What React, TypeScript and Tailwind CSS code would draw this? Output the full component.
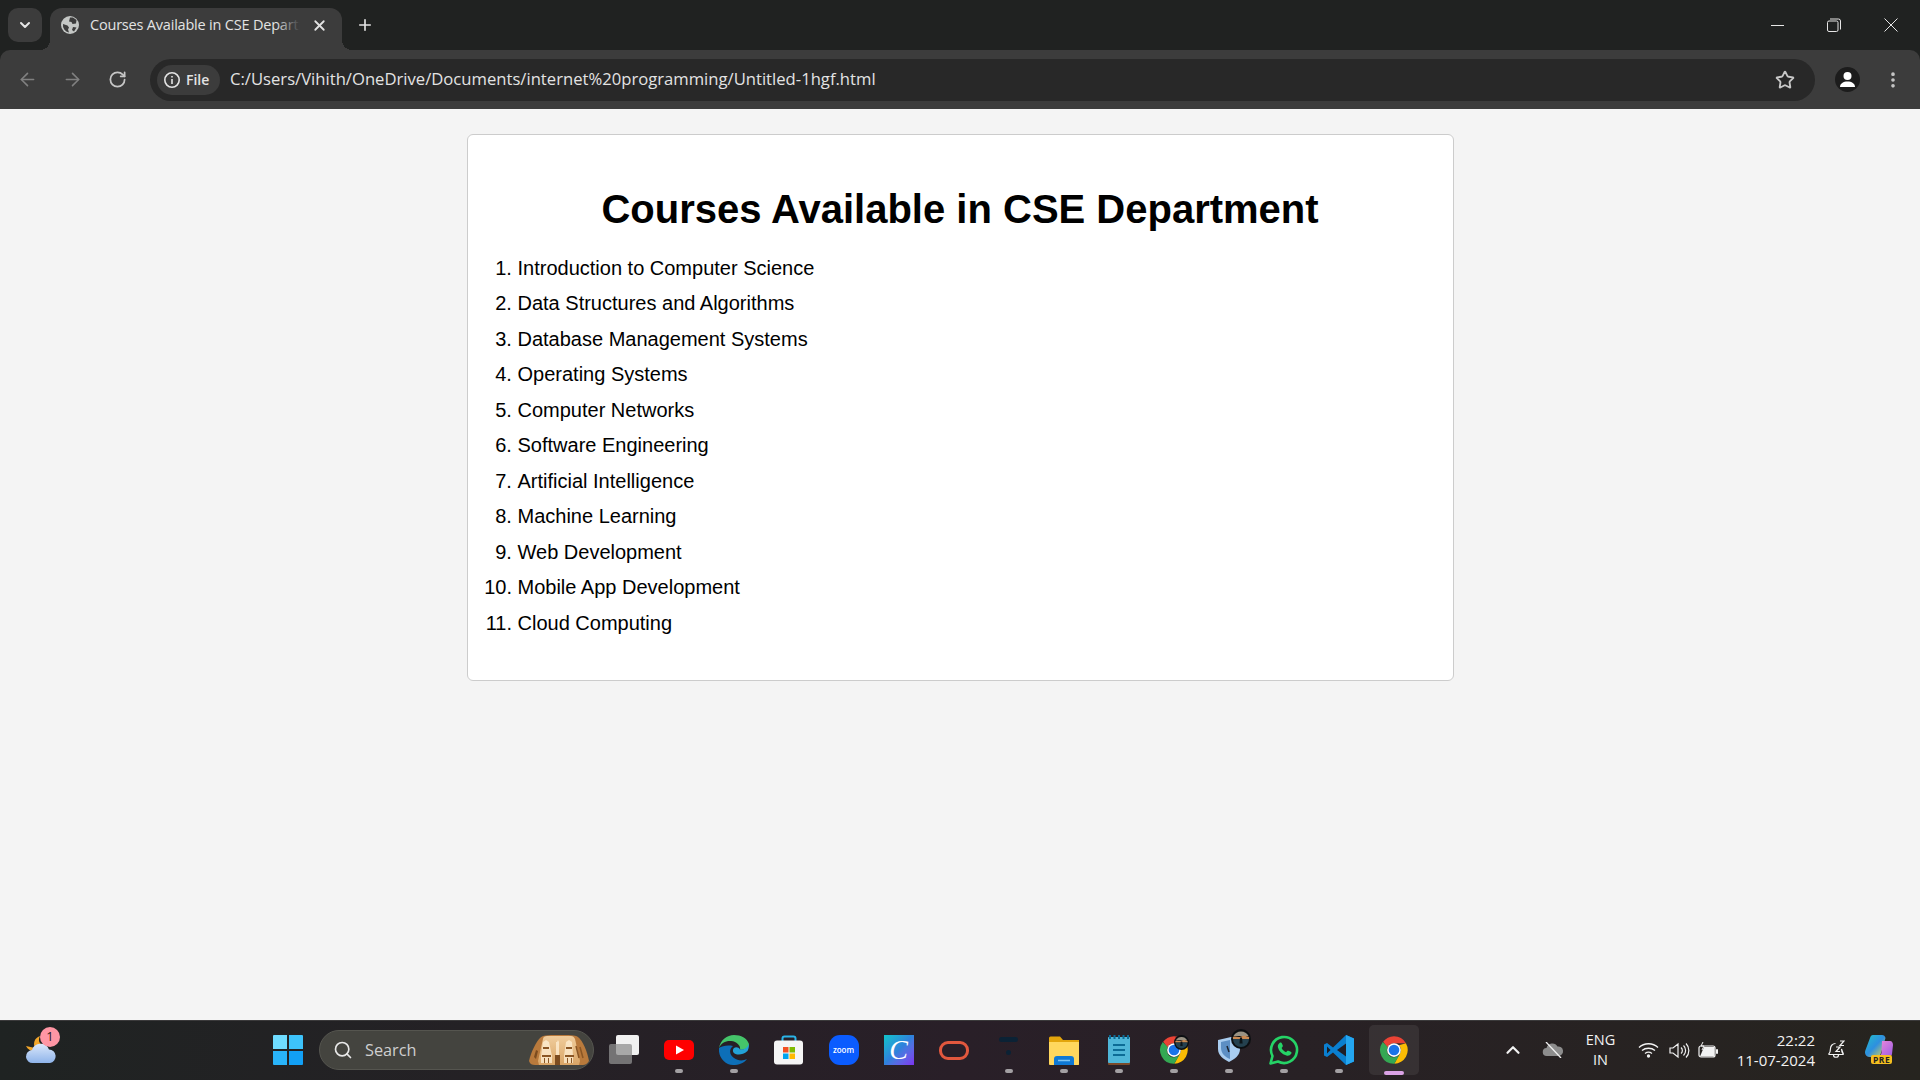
import { ArrowLeft, ArrowRight, ChevronDown, ChevronUp, EllipsisVertical, Plus, RotateCw, Search, Star, X } from 'lucide-react';

const courses = [
  'Introduction to Computer Science',
  'Data Structures and Algorithms',
  'Database Management Systems',
  'Operating Systems',
  'Computer Networks',
  'Software Engineering',
  'Artificial Intelligence',
  'Machine Learning',
  'Web Development',
  'Mobile App Development',
  'Cloud Computing',
];

function ChromeIcon() {
  return (
    <svg width="30" height="30" viewBox="0 0 48 48">
      <path d="M24 2a22 22 0 0 1 19.05 11H24a11 11 0 0 0-10.2 6.9L6.6 10.9A22 22 0 0 1 24 2z" fill="#ea4335" />
      <path d="M43.05 13A22 22 0 0 1 24.5 46l9.1-16.5A11 11 0 0 0 32 16.5z" fill="#fbbc04" />
      <path d="M6 11a22 22 0 0 0 18.5 35l9.1-16A11 11 0 0 1 14 19z" fill="#34a853" />
      <circle cx="24" cy="24" r="11" fill="#fff" />
      <circle cx="24" cy="24" r="8.5" fill="#1a73e8" />
    </svg>
  );
}

function ProfileBadge({ size, className }: { size: number; className: string }) {
  return (
    <svg width={size} height={size} viewBox="0 0 20 20" className={className}>
      <circle cx="10" cy="10" r="10" fill="#0c0f12" />
      <path d="M2.500 7A8.500 8.500 0 0 1 17.500 7z" fill="#9a9384" />
      <path d="M1.800 8C5 6.500 7 9 10 7.500S15 7 18.200 8L18 10H2z" fill="#c98a52" />
      <path d="M2 10h16A8 8 0 0 1 2 10z" fill="#24414f" />
      <path d="M9 8.500h2l.6 6H8.400z" fill="#0c1418" />
    </svg>
  );
}

function TaskIcon({ children, dot }: { children: React.ReactNode; dot?: boolean }) {
  return (
    <div className="relative flex h-[60px] w-[55px] items-center justify-center">
      <div className="relative flex h-[30px] w-[30px] items-center justify-center">{children}</div>
      {dot && <span className="absolute bottom-[7px] h-[4px] w-[8px] rounded-full bg-[#a3a0a3]" />}
    </div>
  );
}

function TabBar() {
  return (
    <div className="flex h-[50px] shrink-0 bg-[#202221] pt-2">
      <div className="ml-2 flex h-[34px] w-[34px] items-center justify-center rounded-[10px] bg-[#3c3c3c]">
        <ChevronDown size={16} strokeWidth={3} color="#e6e6e6" />
      </div>
      <div className="relative ml-2 flex h-[42px] w-[292px] items-center rounded-t-[12px] bg-[#3c3c3c] pb-[8px] pl-[11px]">
        <span className="absolute -left-[10px] bottom-0 h-[10px] w-[10px] bg-[radial-gradient(circle_at_0_0,transparent_10px,#3c3c3c_10px)]" />
        <span className="absolute -right-[10px] bottom-0 h-[10px] w-[10px] bg-[radial-gradient(circle_at_100%_0,transparent_10px,#3c3c3c_10px)]" />
        <svg width="18" height="18" viewBox="0 0 18 18" className="shrink-0">
          <circle cx="9" cy="9" r="9" fill="#c4c7c5" />
          <path d="M9 1.500 12 1.500 15.500 4 15 7.500 11.500 8 10.500 6 8 5.500zM2 8l4.500 1.500 1.500 2-1 2L8 16.500A7.500 7.500 0 0 1 2 8zM12 11l3.500.5L13 15.500 11 14z" fill="#3c3c3c" />
        </svg>
        <div className="relative ml-[11px] w-[210px] overflow-hidden whitespace-nowrap font-['Open_Sans',sans-serif] text-[14.5px] tracking-[-0.2px] text-[#e3e3e3]">
          Courses Available in CSE Department
          <span className="absolute inset-y-0 right-0 w-[24px] bg-gradient-to-r from-transparent to-[#3c3c3c]" />
        </div>
        <X size={17} strokeWidth={2.5} color="#e3e3e3" className="ml-[11px] shrink-0" />
      </div>
      <div className="ml-[14px] flex h-[34px] w-[18px] items-center justify-center">
        <Plus size={18} strokeWidth={2.2} color="#e3e3e3" />
      </div>
      <div className="ml-auto flex h-[34px] pr-px text-white">
        <div className="flex w-[56px] items-center justify-center">
          <span className="h-px w-[13px] bg-[#e6e6e6]" />
        </div>
        <div className="flex w-[57px] items-center justify-center">
          <svg width="14" height="14" viewBox="0 0 14 14" fill="none" stroke="#e6e6e6">
            <rect x="0.5" y="3" width="10.5" height="10.5" rx="1.5" />
            <path d="M3 1h8.500A2 2 0 0 1 13.500 3v8.500" />
          </svg>
        </div>
        <div className="flex w-[57px] items-center justify-center">
          <svg width="14" height="14" viewBox="0 0 14 14" stroke="#e6e6e6">
            <path d="M.5.5l13 13M13.500.5l-13 13" />
          </svg>
        </div>
      </div>
    </div>
  );
}

function Toolbar() {
  return (
    <div className="flex h-[59px] shrink-0 items-center rounded-t-[10px] bg-[#3c3c3c] pl-[5px] pr-[5px]">
      <div className="flex w-[45px] justify-center">
        <ArrowLeft size={21} strokeWidth={1.8} color="#808080" />
      </div>
      <div className="flex w-[45px] justify-center">
        <ArrowRight size={21} strokeWidth={1.8} color="#808080" />
      </div>
      <div className="flex w-[45px] justify-center">
        <RotateCw size={19} strokeWidth={2.2} color="#c7c7c7" />
      </div>
      <div className="ml-[10px] flex h-[42px] w-[1665px] items-center rounded-full bg-[#282828] pl-[7px] pr-[20px]">
        <div className="flex h-[30px] w-[63px] items-center gap-[5px] rounded-full bg-[#3c3c3c] pl-[6px]">
          <svg width="18" height="18" viewBox="0 0 18 18" fill="none" stroke="#e3e3e3" strokeWidth="1.6">
            <circle cx="9" cy="9" r="7.2" />
            <path d="M9 8v5M9 5v1.600" />
          </svg>
          <span className="font-['Open_Sans',sans-serif] text-[14px] font-semibold text-[#e3e3e3]">File</span>
        </div>
        <span className="ml-[10px] font-['Open_Sans',sans-serif] text-[16.65px] text-[#e3e3e3]">
          C:/Users/Vihith/OneDrive/Documents/internet%20programming/Untitled-1hgf.html
        </span>
        <Star size={20} strokeWidth={2.2} color="#c7c7c7" className="ml-auto" />
      </div>
      <div className="ml-[20px] flex h-[25px] w-[25px] items-center justify-center rounded-full bg-[#1c1c1c]">
        <svg width="17" height="17" viewBox="0 0 17 17" fill="#fff">
          <circle cx="8.5" cy="5" r="4" />
          <path d="M1 16c0-3.600 3.400-5.500 7.500-5.500S16 12.400 16 16z" />
        </svg>
      </div>
      <div className="ml-[20px] flex w-[25px] justify-center">
        <EllipsisVertical size={20} strokeWidth={2.4} color="#c7c7c7" />
      </div>
    </div>
  );
}

function Taskbar() {
  return (
    <div className="flex h-[60px] shrink-0 items-center border-t border-[#3b3a3b] bg-gradient-to-r from-[#1f2322] via-[#291f28] to-[#26241f] pb-px">
      <div className="relative flex h-[60px] w-[260px] shrink-0 pl-[25px]">
        <svg width="32" height="34" viewBox="0 0 32 34" className="mt-[15px]">
          <defs>
            <linearGradient id="weatherCloud" x1="0" y1="0" x2="0" y2="1">
              <stop offset="0" stopColor="#dbe8fb" />
              <stop offset="1" stopColor="#8fb4ea" />
            </linearGradient>
          </defs>
          <path d="M15 1C9 3 8 9 10 13L1 11c2 4 6 6 10 5l6-6C14 8 13 5 15 1z" fill="#f2a62a" />
          <path d="M8 28a6.500 6.500 0 0 1-1-13 9 9 0 0 1 17-.5A6.800 6.800 0 0 1 25 28z" fill="url(#weatherCloud)" />
        </svg>
        <span className="absolute left-[40px] top-[7px] flex h-[20px] w-[20px] items-center justify-center rounded-full bg-[#ff96a4] font-['Open_Sans',sans-serif] text-[13px] text-[#2a1a1c]">
          1
        </span>
      </div>

      <div className="flex w-[56px] shrink-0 justify-center">
        <svg width="30" height="30" viewBox="0 0 30 30">
          <path d="M0 1a1 1 0 0 1 1-1h13v14H0z" fill="#6fdcff" />
          <path d="M16 0h13a1 1 0 0 1 1 1v13H16z" fill="#3dc3fb" />
          <path d="M0 16h14v14H1a1 1 0 0 1-1-1z" fill="#29b4fa" />
          <path d="M16 16h14v13a1 1 0 0 1-1 1H16z" fill="#12a0f5" />
        </svg>
      </div>

      <div className="ml-[3px] flex h-[40px] w-[275px] shrink-0 items-center rounded-full border border-[#55554f] bg-[#44443f] pl-[13px]">
        <Search size={20} strokeWidth={2} color="#e8e8e8" />
        <span className="ml-[12px] font-['Open_Sans',sans-serif] text-[16.3px] text-[#cfcfcf]">Search</span>
        <svg width="62" height="32" viewBox="0 0 62 32" className="ml-auto mr-[3px]">
          <defs>
            <linearGradient id="templeFront" x1="0" y1="0" x2="0" y2="1">
              <stop offset="0" stopColor="#f0cd9c" />
              <stop offset="1" stopColor="#d9a566" />
            </linearGradient>
          </defs>
          <path d="M1 27C3 18 8 8 12 4 15 1 19 1 30 1s17 0 20 2c5 4 9 14 11 24-2 3-4 4-6 4H7c-3 0-5-1-6-4z" fill="#b97a3c" />
          <path d="M10 27 15 5c0-2 2-3 4-3h24c2 0 3 1 4 3l5 22-1 4H11z" fill="url(#templeFront)" />
          <path d="M15 8l3-2 3 2 3 14v7h-11v-7zM28 8h1l1-2 1 2v21h-3zM38 8l3-2 3 2 1 14v7H36v-7z" fill="#fff0d6" opacity=".75" />
          <path d="M15 13h6v2h-6zM38 13h6v2h-6zM14 21h9v2h-9zM37 21h9v2h-9zM16 24h1v5h-1zM20 24h1v5h-1zM39 24h1v5h-1zM43 24h1v5h-1z" fill="#8a5624" />
          <path d="M27 21h5v10h-5zM6 23l2-7 2 1-2 8z" fill="#7c4c1f" />
          <path d="M48 12l3 12M52 13l3 11" stroke="#8a5624" strokeWidth="1.500" />
        </svg>
      </div>

      <div className="ml-[2px] flex shrink-0">
        <TaskIcon>
          <div className="absolute left-[7px] top-0 h-[20px] w-[23px] rounded-[2px] bg-[#f1f1f1]" />
          <div className="absolute bottom-[1px] left-0 h-[20px] w-[23px] rounded-[2px] bg-[#8f8f8f]/75" />
        </TaskIcon>
        <TaskIcon dot>
          <svg width="30" height="30" viewBox="0 0 30 30">
            <rect y="5" width="30" height="20" rx="5" fill="#f00" />
            <path d="M12 10.500l8 4.500-8 4.500z" fill="#fff" />
          </svg>
        </TaskIcon>
        <TaskIcon dot>
          <svg width="30" height="30" viewBox="0 0 30 30">
            <path d="M15 0C8 0 1.500 5 0 13c2-5 7-7.500 12-7 6 .5 10 5 9 8.500 5 1 9-2 9-5.500C28 3 22 0 15 0z" fill="#45c46a" />
            <path d="M0 13C-1 22 6 30 14 30c6 0 11-2 14-6-4 2-9 2-13-1-5-3-5-9-1-12-6-1-11 0-14 2z" fill="#0d6fb8" />
            <path d="M21 14.500c-1-2-4-3-6-1.500-2 2-1 5 1.500 6 3 1 7.500 1 12-3 1-2 1.500-4 1.500-7-2 4-5 6-9 5.500z" fill="#23a3d9" />
          </svg>
        </TaskIcon>
        <TaskIcon>
          <svg width="30" height="30" viewBox="0 0 30 30">
            <path d="M8.500 7V3.500a2 2 0 0 1 2-2h9a2 2 0 0 1 2 2V7" fill="none" stroke="#2ab4e8" strokeWidth="2" />
            <rect y="5.500" width="29" height="24" rx="3" fill="#f5f5f5" />
            <rect x="9" y="12" width="5.500" height="5.500" fill="#f25022" />
            <rect x="15.500" y="12" width="5.500" height="5.500" fill="#7fba00" />
            <rect x="9" y="18.500" width="5.500" height="5.500" fill="#00a4ef" />
            <rect x="15.500" y="18.500" width="5.500" height="5.500" fill="#ffb900" />
          </svg>
        </TaskIcon>
        <TaskIcon>
          <div className="flex h-[30px] w-[30px] items-center justify-center rounded-[11px] bg-[#0b5cff] font-['Open_Sans',sans-serif] text-[8px] font-semibold text-white">
            zoom
          </div>
        </TaskIcon>
        <TaskIcon>
          <div className="flex h-[30px] w-[30px] items-center justify-center bg-gradient-to-br from-[#0fc4c9] via-[#2f80dc] to-[#7b2ff0] font-['Liberation_Serif',serif] text-[28px] italic text-white">
            C
          </div>
        </TaskIcon>
        <TaskIcon>
          <div className="h-[19px] w-[30px] rounded-[9px] border-[3px] border-[#e2583e]" />
        </TaskIcon>
        <TaskIcon dot>
          <div className="mb-[8px] flex flex-col items-center gap-[8px]">
            <span className="h-[5px] w-[19px] rounded-full bg-[#0b2235]" />
            <span className="h-[5px] w-[5px] rounded-full bg-[#0b2235]" />
          </div>
        </TaskIcon>
        <TaskIcon dot>
          <svg width="30" height="30" viewBox="0 0 30 30">
            <path d="M0 3a1.500 1.500 0 0 1 1.500-1.500H11L14 5h16v25H1.500A1.500 1.500 0 0 1 0 28.500z" fill="#e3a50c" />
            <path d="M0 7h30v21.500a1.500 1.500 0 0 1-1.500 1.500h-27A1.500 1.500 0 0 1 0 28.500z" fill="#ffd75e" />
            <path d="M5 30v-6a3 3 0 0 1 3-3h14a3 3 0 0 1 3 3v6z" fill="#0f78d4" />
            <path d="M9 25.500h12" stroke="#7cc4f4" strokeWidth="1.500" />
          </svg>
        </TaskIcon>
        <TaskIcon dot>
          <svg width="24" height="30" viewBox="0 0 24 30">
            <rect x="1" y="2" width="22" height="28" rx="1" fill="#7b4a2a" />
            <rect x="1" y="2" width="22" height="26" rx="1" fill="#4fb6d8" />
            <path d="M3 0v4M7.500 0v4M12 0v4M16.500 0v4M21 0v4" stroke="#0c6c96" strokeWidth="2" />
            <path d="M6 10h12M6 15h12M6 20h12" stroke="#0c6c96" strokeWidth="2" />
          </svg>
        </TaskIcon>
        <TaskIcon dot>
          <ChromeIcon />
          <ProfileBadge size={15} className="absolute left-[15px] top-0" />
        </TaskIcon>
        <TaskIcon dot>
          <svg width="30" height="30" viewBox="0 0 30 30">
            <path d="M4 5 17 2 26 4V14C26 20 21 24 15 27 9 24 4 20 4 14z" fill="#a9cdf0" />
            <path d="M7 7 16 5V24C11 22 7 18 7 13z" fill="#5d8fc4" />
            <path d="M13 11l2 6" stroke="#1c2430" strokeWidth="1.500" />
          </svg>
          <ProfileBadge size={20} className="absolute left-[17px] -top-[6px]" />
        </TaskIcon>
        <TaskIcon dot>
          <svg width="30" height="30" viewBox="0 0 30 30">
            <path d="M1.500 28.500 3.500 21A13 13 0 1 1 9 26.500z" fill="none" stroke="#25d366" strokeWidth="2.600" strokeLinejoin="round" />
            <path d="M10.500 8c1-.8 2-.6 2.400.4l.9 2.200c.2.500 0 1-.4 1.400l-.8.900c1 2 2.500 3.400 4.500 4.300l1-1.100c.4-.4.900-.5 1.400-.3l2.200 1c.8.400 1 1.200.5 2-1 1.500-2.800 2.300-4.800 1.700-4.600-1.400-7.600-4.400-8.500-8.300-.3-1.600.2-3.100 1.600-4.200z" fill="#25d366" />
          </svg>
        </TaskIcon>
        <TaskIcon dot>
          <svg width="30" height="30" viewBox="0 0 30 30">
            <path d="M22 0 30 3.500V26.500L22 30 9 17.500 3 22 0 20.500V9.500L3 8 9 12.500z" fill="#0a7fd0" />
            <path d="M22 0 30 3.500V26.500L22 30z" fill="#24a6f0" />
            <path d="M3 11.500 6.500 15 3 18.500z" fill="#1a1d24" />
            <path d="M22 8.500 13 15 22 21.500z" fill="#1f1e28" />
          </svg>
        </TaskIcon>
        <div className="relative flex h-[60px] w-[55px] items-center justify-center">
          <div className="absolute left-[2.500px] top-[5px] h-[50px] w-[50px] rounded-[5px] bg-white/[0.07]" />
          <div className="relative flex">
            <ChromeIcon />
          </div>
          <span className="absolute bottom-[5px] h-[4px] w-[20px] rounded-full bg-[#dba3e6]" />
        </div>
      </div>

      <div className="ml-auto flex items-center pr-[25px] font-['Open_Sans',sans-serif] text-[#f2f2f2]">
        <ChevronUp size={22} strokeWidth={2.400} color="#f2f2f2" />
        <svg width="22" height="16" viewBox="0 0 22 16" className="ml-[18px]">
          <path d="M5 14a4 4 0 0 1-.5-8 6 6 0 0 1 11-1.500 4.700 4.700 0 0 1 1.500 9.500z" fill="#8d8d8d" />
          <path d="M4 0 19 16" stroke="#f0f0f0" strokeWidth="1.300" />
        </svg>
        <div className="ml-[17px] flex w-[40px] flex-col items-center text-[14.5px] leading-[20px]">
          <span>ENG</span>
          <span>IN</span>
        </div>
        <svg width="21" height="16" viewBox="0 0 21 16" fill="none" stroke="#f2f2f2" strokeWidth="1.300" className="ml-[17px]">
          <path d="M1 5.500c5-5 14-5 19 0M4 8.500c3.500-3 9.500-3 13 0M7 11.500c2-1.500 5-1.500 7 0" />
          <circle cx="10.500" cy="14" r="1" fill="#f2f2f2" />
        </svg>
        <svg width="21" height="17" viewBox="0 0 21 17" fill="none" stroke="#f2f2f2" strokeWidth="1.200" className="ml-[10px]">
          <path d="M1 6h3l5-4v13l-5-4H1zM12 5.500a4 4 0 0 1 0 6M14.500 3.500a7 7 0 0 1 0 10M17 1.500a10 10 0 0 1 0 14" />
        </svg>
        <svg width="20" height="17" viewBox="0 0 20 17" className="ml-[8px]">
          <rect x="1" y="4" width="16" height="11" rx="2" fill="none" stroke="#f2f2f2" strokeWidth="1.200" />
          <path d="M2 14.500 6 5h10.500v9.500z" fill="#f2f2f2" />
          <path d="M5 0 3 4h3L4 8" stroke="#f2f2f2" fill="none" />
          <rect x="18" y="7" width="2" height="5" rx="1" fill="#f2f2f2" />
        </svg>
        <div className="ml-[17.500px] flex w-[80px] flex-col items-end text-[15px] leading-[20px]">
          <span>22:22</span>
          <span>11-07-2024</span>
        </div>
        <svg width="18" height="20" viewBox="0 0 18 20" fill="none" stroke="#f2f2f2" strokeWidth="1.200" className="ml-[11.500px]">
          <path d="M1.500 14.500c1.500-1.500 2-2.500 2-6a5 5 0 0 1 5-5M14.500 9c0 3 .5 4 2 5.500zM1.500 14.500h15M6.500 15c0 3 5 3 5 0" />
          <path d="M9 7h4l-4 4.500h4M13 1h4l-4 4.500h4" />
        </svg>
        <div className="relative ml-[20.500px] h-[30px] w-[30px]">
          <svg width="28" height="22" viewBox="0 0 28 22" className="absolute left-0 top-0">
            <defs>
              <linearGradient id="copilotLeft" x1="0" y1="0" x2="1" y2="1">
                <stop offset="0" stopColor="#22c0c8" />
                <stop offset=".5" stopColor="#2e8fe0" />
                <stop offset="1" stopColor="#e8d84c" />
              </linearGradient>
              <linearGradient id="copilotRight" x1="0" y1="0" x2="1" y2="1">
                <stop offset="0" stopColor="#f08ad8" />
                <stop offset="1" stopColor="#9a5ce6" />
              </linearGradient>
            </defs>
            <path d="M8 0h9c2 0 3 1 3.500 3L16 18c-.5 2-2 4-5 4H5c-4 0-6-3-4.500-7L5 3c.5-2 1.500-3 3-3z" fill="url(#copilotLeft)" />
            <path d="M17 6h8c2 0 3 2 3 4l-1 9c0 2-2 3-4 3H13c2-1 3-2 3.500-4z" fill="url(#copilotRight)" />
          </svg>
          <span className="absolute bottom-[1px] left-[6px] rounded-[2px] bg-[#f5bf1f] px-[2px] font-['Open_Sans',sans-serif] text-[8.500px] font-bold leading-[9px] tracking-[0.5px] text-[#222]">
            PRE
          </span>
        </div>
      </div>
    </div>
  );
}

export default function App() {
  return (
    <div className="flex h-screen w-full flex-col overflow-hidden bg-[#202221]">
      <TabBar />
      <Toolbar />
      <main className="flex-1 bg-[#f4f4f4] pt-[25px] font-['Liberation_Sans',sans-serif] text-black">
        <div className="mx-auto h-[547px] w-[987px] rounded-[6px] border border-[#cccccc] bg-white px-[25px] pt-[51px]">
          <h1 className="mb-[24.75px] text-center text-[40px] font-bold leading-[46px]">Courses Available in CSE Department</h1>
          <ol className="list-decimal pl-[25px] text-[20px] leading-[23px] marker:text-black">
            {courses.map((course) => (
              <li key={course} className="mb-[12.500px]">
                {course}
              </li>
            ))}
          </ol>
        </div>
      </main>
      <Taskbar />
    </div>
  );
}
